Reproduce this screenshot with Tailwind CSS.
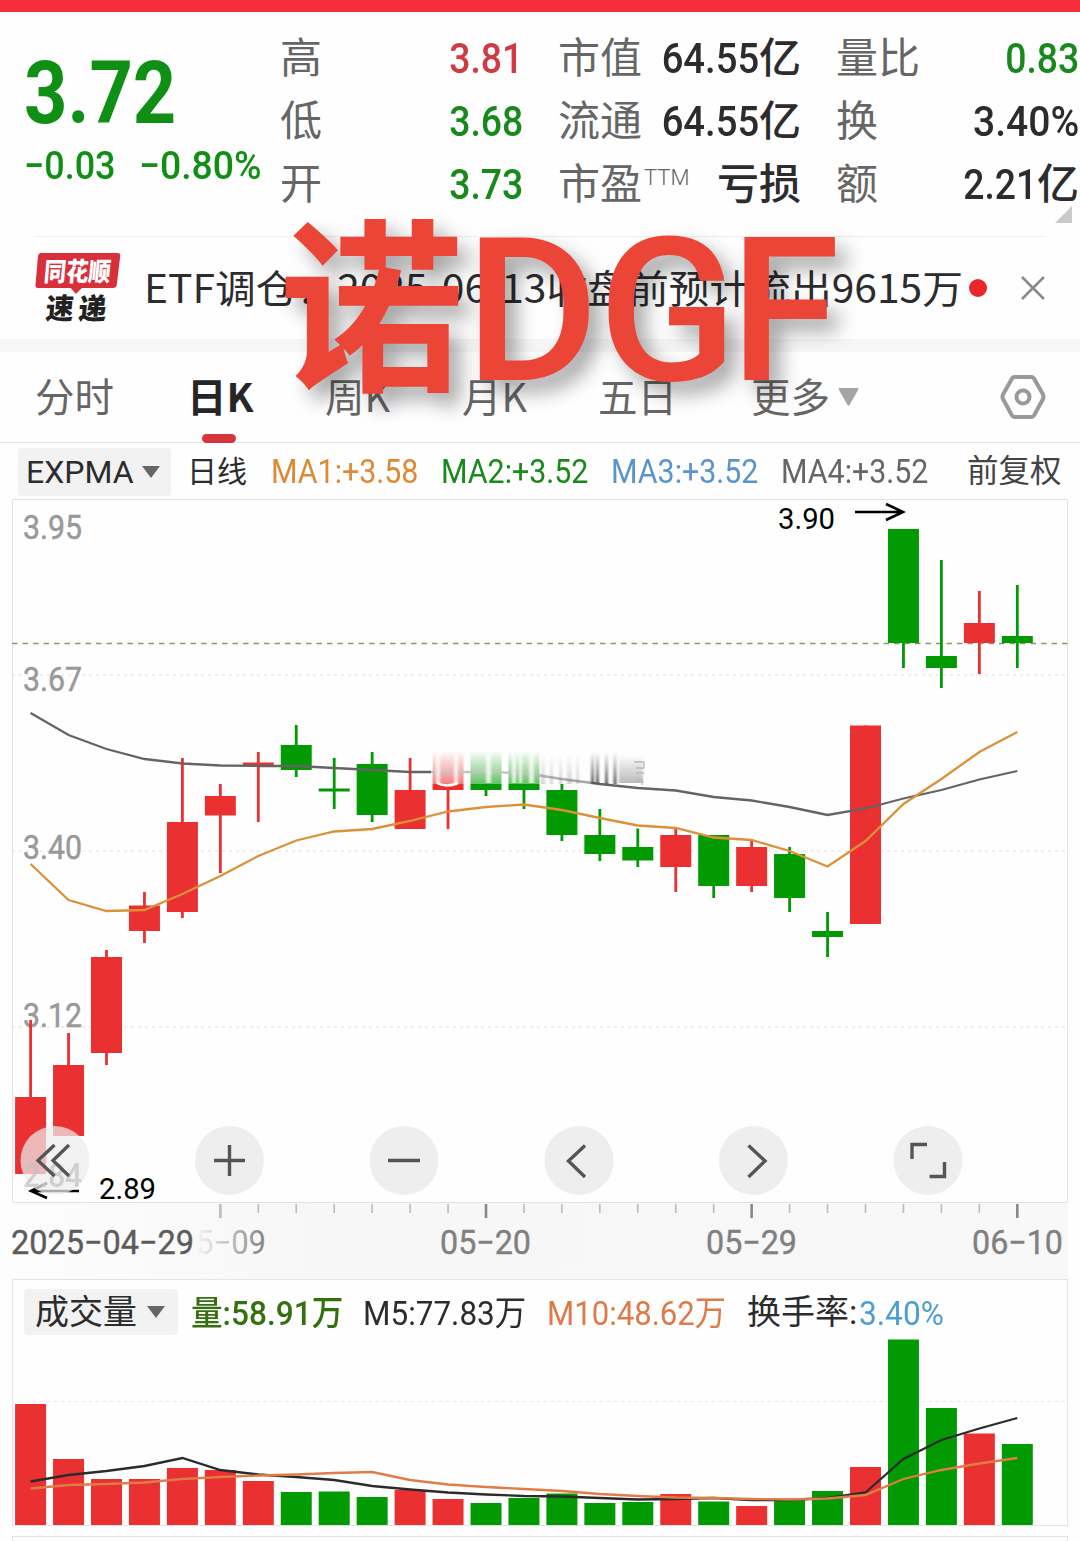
<!DOCTYPE html>
<html lang="zh-CN">
<head>
  <meta charset="UTF-8">
  <title>诺DGF 3.72</title>
  <script src="https://cdn.jsdelivr.net/npm/@tailwindcss/browser@4"></script>
</head>
<body class="bg-[#fefefe] w-[1080px] h-[1541px] overflow-hidden relative font-['Roboto','Noto_Sans_CJK_SC',sans-serif] text-[#2c2c2e] whitespace-nowrap">

  <!-- Top bar -->
  <div class="h-[11.5px] bg-[#f62d3a]"></div>

  <!-- Quote header -->
  <header class="relative h-[224px] flex pt-[15px] text-[42px] leading-[63px] font-medium">
    <div class="w-[280px] pl-[24px] pt-[20px] text-[#0f8f14]">
      <div class="text-[87px] leading-[92px] font-bold origin-left scale-x-[0.87]">3.72</div>
      <div class="flex text-[39.5px] leading-[54px]">
        <span class="w-[115px] origin-left scale-x-[0.91]">−0.03</span>
        <span class="origin-left scale-x-[0.945]">−0.80%</span>
      </div>
    </div>
    <div class="w-[243px]">
      <div class="flex justify-between"><span class="font-normal text-[#666]">高</span><span class="text-[#d03a40] origin-right scale-x-[0.89]">3.81</span></div>
      <div class="flex justify-between"><span class="font-normal text-[#666]">低</span><span class="text-[#178a1b] origin-right scale-x-[0.89]">3.68</span></div>
      <div class="flex justify-between"><span class="font-normal text-[#666]">开</span><span class="text-[#178a1b] origin-right scale-x-[0.89]">3.73</span></div>
    </div>
    <div class="w-[243px] ml-[35px]">
      <div class="flex justify-between"><span class="font-normal text-[#666]">市值</span><span class="flex"><span class="origin-right scale-x-[0.91]">64.55</span>亿</span></div>
      <div class="flex justify-between"><span class="font-normal text-[#666]">流通</span><span class="flex"><span class="origin-right scale-x-[0.91]">64.55</span>亿</span></div>
      <div class="flex justify-between"><span class="flex font-normal text-[#666]">市盈<span class="text-[22px] leading-[50px] font-light pl-[2px]">TTM</span></span><span>亏损</span></div>
    </div>
    <div class="w-[243px] ml-[35px]">
      <div class="flex justify-between"><span class="font-normal text-[#666]">量比</span><span class="text-[#178a1b] origin-right scale-x-[0.89]">0.83</span></div>
      <div class="flex justify-between"><span class="font-normal text-[#666]">换</span><span class="origin-right scale-x-[0.93]">3.40%</span></div>
      <div class="flex justify-between"><span class="font-normal text-[#666]">额</span><span class="flex"><span class="origin-right scale-x-[0.89]">2.21</span>亿</span></div>
    </div>
    <svg class="absolute right-[8px] bottom-[13px] w-[17px] h-[17px]" viewBox="0 0 17 17"><path d="M17 0V17H0Z" fill="#c9c9c9"/></svg>
  </header>

  <!-- News strip -->
  <div class="mx-[35px] border-t border-[#efefef] h-[103px] flex items-center">
    <svg class="w-[88px] h-[74px]" viewBox="0 0 88 74">
      <path d="M6 2H83Q86 2 85.500 5L82 34Q81.500 37 78 37H47L41 43L36 37H3Q0 37 .5 34L3 5Q3.500 2 6 2Z" fill="#d8303b"/>
      <text x="9" y="30" font-size="26" font-weight="900" fill="#fff" textLength="67" lengthAdjust="spacingAndGlyphs" transform="skewX(-5) translate(2 0)">同花顺</text>
      <g transform="translate(15 68) skewX(-5)" font-size="29" font-weight="900" fill="#222">
        <text x="-5" y="0" textLength="28" lengthAdjust="spacingAndGlyphs">速</text>
        <text x="28" y="0" textLength="28" lengthAdjust="spacingAndGlyphs">递</text>
      </g>
    </svg>
    <div class="ml-[21px] w-[824px] text-[39px] font-['Noto_Sans_CJK_SC',sans-serif]"><span class="inline-block origin-left scale-x-[1.045] -translate-y-px">ETF调仓：2025-06-13收盘前预计流出9615万</span></div>
    <div class="w-[18px] h-[18px] ml-[4px] rounded-full bg-[#e8262c]"></div>
    <svg class="w-[24px] h-[24px] ml-[34px]" viewBox="0 0 24 24" fill="none" stroke="#8a8a8a" stroke-width="2.600"><path d="M1 1L23 23M23 1L1 23"/></svg>
  </div>
  <div class="h-[13px] bg-[#f6f6f6]"></div>

  <!-- Period tabs -->
  <nav class="h-[91px] border-b border-[#e4e4e4] flex text-[39.5px] leading-[86px] text-[#666] font-['Noto_Sans_CJK_SC',sans-serif] pl-[35px]">
    <span class="w-[152px]">分时</span>
    <span class="relative w-[138px] font-bold text-[#262626]">日K<i class="absolute left-[15px] bottom-[-1px] w-[34px] h-[9px] rounded-full bg-[#d7343b]"></i></span>
    <span class="w-[137px]">周K</span>
    <span class="w-[136px]">月K</span>
    <span class="w-[153px]">五日</span>
    <span class="w-[87px]">更多</span>
    <svg class="w-[21px] h-[18px] mt-[36px]" viewBox="0 0 21 18"><path d="M1.500 0H19.500Q21 0 20 2L11.500 17Q10.500 18.500 9.500 17L1 2Q0 0 1.500 0Z" fill="#a5a5a5"/></svg>
    <svg class="w-[46px] h-[44px] mt-[23px] ml-[141px]" viewBox="0 0 46 44" fill="none" stroke="#999" stroke-width="4" stroke-linejoin="round"><path d="M14.500 2H31.500Q33 2 34 3.500L43 19.500Q44 22 43 24L34 40.500Q33 42 31.500 42H14.500Q13 42 12 40.500L3 24Q2 22 3 19.500L12 3.500Q13 2 14.500 2Z"/><circle cx="23" cy="22" r="6.500"/></svg>
  </nav>

  <!-- Indicator row -->
  <div class="h-[56px] flex items-center pl-[18px] pt-[2px] text-[33px] leading-[48px]">
    <div class="w-[153px] h-[48px] rounded bg-[#f2f2f2] flex items-center pl-[8px]">
      <span class="w-[116px] text-[32px]">EXPMA</span>
      <svg class="w-[18px] h-[12px]" viewBox="0 0 18 12"><path d="M0 0H18L9 12Z" fill="#666"/></svg>
    </div>
    <span class="w-[85px] pl-[16px] text-[30px]">日线</span>
    <span class="w-[170px] pl-[15px]"><span class="inline-block origin-left scale-x-[0.92] text-[#dc8a35]">MA1:+3.58</span></span>
    <span class="w-[170px] pl-[15px]"><span class="inline-block origin-left scale-x-[0.92] text-[#178a1b]">MA2:+3.52</span></span>
    <span class="w-[170px] pl-[15px]"><span class="inline-block origin-left scale-x-[0.92] text-[#5a94cc]">MA3:+3.52</span></span>
    <span class="w-[186px] pl-[15px]"><span class="inline-block origin-left scale-x-[0.92] text-[#666]">MA4:+3.52</span></span>
    <span class="pl-[15px] text-[31.500px] text-[#444]">前复权</span>
  </div>

  <!-- K-line chart -->
  <div class="relative h-[780px]">
    <svg id="kline" class="block w-[1080px] h-[780px]" viewBox="0 499 1080 780">
      <defs>
        <linearGradient id="fade" x1="0" y1="0" x2="0" y2="1"><stop offset="0" stop-color="#fefefe"/><stop offset=".15" stop-color="#fefefe" stop-opacity=".95"/><stop offset="1" stop-color="#fefefe" stop-opacity="0.4"/></linearGradient>
        <linearGradient id="streak" x1="0" y1="0" x2="0" y2="1"><stop offset="0" stop-color="#555" stop-opacity="0"/><stop offset="1" stop-color="#555"/></linearGradient>
        <filter id="smear" x="-5%" width="110%"><feGaussianBlur stdDeviation="1 0"/></filter>
        <linearGradient id="axis" x1="0" y1="0" x2="1" y2="0"><stop offset="0" stop-color="#fdfdfd"/><stop offset=".3" stop-color="#f7f7f7"/><stop offset="1" stop-color="#f8f8f8"/></linearGradient>
        <linearGradient id="dateFade" x1="190" x2="262" y1="0" y2="0" gradientUnits="userSpaceOnUse"><stop offset="0" stop-color="#fff"/><stop offset=".25" stop-color="#e4e4e4"/><stop offset="1" stop-color="#888"/></linearGradient>
      </defs>
      <rect x="0" y="1203" width="1068" height="76" fill="url(#axis)"/>
      <rect x="12.500" y="499.500" width="1055" height="703" fill="none" stroke="#e2e2e2"/>
      <g stroke="#dedede" stroke-dasharray="3 4"><path d="M12 675H1068M12 851H1068M12 1027H1068"/></g>
      <g fill="#999" stroke="#999" stroke-width=".5" font-size="33.500">
        <text x="23" y="539" textLength="59" lengthAdjust="spacingAndGlyphs">3.95</text>
        <text x="23" y="691" textLength="59" lengthAdjust="spacingAndGlyphs">3.67</text>
        <text x="23" y="859" textLength="59" lengthAdjust="spacingAndGlyphs">3.40</text>
        <text x="23" y="1027" textLength="59" lengthAdjust="spacingAndGlyphs">3.12</text>
      </g>
      <path d="M12 643.500H1068" stroke="#8b9a66" stroke-width="1.300" stroke-dasharray="5.500 5"/>
      <g id="candles"></g>
      <polyline id="maSlow" fill="none" stroke="#646464" stroke-width="2.300"/>
      <!-- faded watermark -->
      <rect x="431" y="748" width="161" height="36" fill="url(#fade)"/>
      <path d="M437 783Q447 788 458 783" fill="none" stroke="#fff" stroke-width="2.500"/>
      <g filter="url(#smear)">
        <g fill="#fff" opacity=".75"><rect x="436" y="753" width="4" height="30"/><rect x="454" y="753" width="4" height="30"/><rect x="486" y="753" width="5" height="30"/><rect x="512" y="753" width="4" height="30"/><rect x="519" y="753" width="3" height="30"/><rect x="529" y="753" width="5" height="30"/></g>
        <g fill="url(#streak)" opacity=".25"><rect x="541" y="755" width="4" height="29"/><rect x="550" y="755" width="3" height="29"/><rect x="559" y="755" width="3" height="29"/><rect x="567" y="755" width="5" height="29"/><rect x="576" y="755" width="3" height="29"/></g>
        <g fill="url(#streak)"><rect x="591" y="752" width="3" height="32"/><rect x="596" y="752" width="3" height="32"/><rect x="605" y="752" width="3" height="32"/><rect x="613.500" y="752" width="3" height="32"/></g>
        <g fill="url(#streak)" opacity=".4"><rect x="619" y="755" width="24" height="28"/></g>
      </g>
      <path d="M634 762H644V768H636M636 773H644M637 780H642V785" fill="none" stroke="#bbb" stroke-width="1.300"/>
      <polyline id="maFast" fill="none" stroke="#dc9138" stroke-width="2.300"/>
      <g font-size="30" fill="#000">
        <text x="778" y="529" textLength="57" lengthAdjust="spacingAndGlyphs">3.90</text>
        <text x="99" y="1199" textLength="57" lengthAdjust="spacingAndGlyphs">2.89</text>
      </g>
      <g fill="none" stroke="#000" stroke-width="2.600"><path d="M855 512H903M886 504L903 512L886 520"/><path d="M79 1191H31M47 1183L31 1191L47 1198"/></g>
      <g id="ticks"></g>
      <!-- chart buttons -->
      <g fill="#ededed" fill-opacity=".93"><circle cx="229.500" cy="1160.500" r="34.500"/><circle cx="404" cy="1160.500" r="34.500"/><circle cx="579" cy="1160.500" r="34.500"/><circle cx="753.500" cy="1160.500" r="34.500"/><circle cx="928" cy="1160.500" r="34.500"/></g>
      <circle cx="55" cy="1160.500" r="34.500" fill="#ededed" fill-opacity=".72"/>
      <text x="23" y="1187" textLength="59" lengthAdjust="spacingAndGlyphs" font-size="33.500" font-weight="500" fill="#c4c4c4" fill-opacity=".75">2.84</text>
      <g fill="none" stroke="#555" stroke-width="3.400">
        <path d="M54.500 1145L38 1160.500L54.500 1176M69 1145L53 1160.500L69 1176"/>
        <path d="M214 1160.500H245M229.500 1145V1176M388 1160.500H420"/>
        <path d="M585 1145.500L568.500 1161L585 1177M748.500 1145.500L765 1161L748.500 1177"/>
        <path d="M912 1159V1144.500H927M929.500 1176.500H944.500V1162"/>
      </g>
      <g font-size="33" fill="#808080" stroke-width=".4">
        <text x="196" y="1254" textLength="70" lengthAdjust="spacingAndGlyphs" fill="url(#dateFade)">5−09</text>
        <g stroke="#808080">
          <text x="440" y="1254" textLength="91" lengthAdjust="spacingAndGlyphs">05−20</text>
          <text x="706" y="1254" textLength="91" lengthAdjust="spacingAndGlyphs">05−29</text>
          <text x="972" y="1254" textLength="91" lengthAdjust="spacingAndGlyphs">06−10</text>
        </g>
        <text x="11" y="1254" textLength="183" lengthAdjust="spacingAndGlyphs" fill="#5c5c5c" stroke="#5c5c5c">2025−04−29</text>
      </g>
    </svg>
  </div>

  <!-- Volume panel -->
  <section class="mx-[12px] h-[247px] border border-[#e4e4e4]">
    <div class="flex items-center h-[46px] mt-[9px] pl-[11px] text-[34px] leading-[46px]">
      <div class="w-[154px] h-[46px] rounded bg-[#f2f2f2] flex items-center pl-[11px]">
        <span class="w-[112px]">成交量</span>
        <svg class="w-[18px] h-[12px]" viewBox="0 0 18 12"><path d="M0 0H18L9 12Z" fill="#666"/></svg>
      </div>
      <span class="w-[172px] pl-[13px] pt-[2px] text-[#35700f] font-medium"><span class="inline-block origin-left scale-x-[0.93]">量:58.91万</span></span>
      <span class="w-[184px] pl-[13px] pt-[2px]"><span class="inline-block origin-left scale-x-[0.925]">M5:77.83万</span></span>
      <span class="w-[200px] pl-[13px] pt-[2px] text-[#dd7a48]"><span class="inline-block origin-left scale-x-[0.915]">M10:48.62万</span></span>
      <span class="w-[125px] pl-[13px]">换手率:</span>
      <span class="pt-[2px] origin-left scale-x-[0.93] text-[#4b9fd0]">3.40%</span>
    </div>
    <svg class="block w-[1056px] h-[190px] -ml-px" viewBox="12 1335 1056 190">
      <path d="M12 1401.500H1068" stroke="#e6e6e6" stroke-dasharray="3 4"/>
      <g id="bars"></g>
      <polyline id="vol5" fill="none" stroke="#2b2b2b" stroke-width="2.300"/>
      <polyline id="vol10" fill="none" stroke="#e07c45" stroke-width="2.300"/>
    </svg>
  </section>
  <div class="mx-[12px] mt-[10px] h-[6px] border border-b-0 border-[#e4e4e4]"></div>

  <!-- Title caption -->
  <svg class="absolute left-0 top-[190px] w-[1080px] h-[240px] drop-shadow-[11px_12px_10px_rgba(0,0,0,0.35)]" viewBox="0 190 1080 240" fill="#eb4537">
    <text x="279" y="377" font-size="185" font-weight="700" font-family="Noto Sans CJK SC">诺</text>
    <g font-size="201" font-weight="500">
      <text x="465" y="380" textLength="134" lengthAdjust="spacingAndGlyphs">D</text>
      <text x="598" y="380" textLength="139" lengthAdjust="spacingAndGlyphs">G</text>
      <text x="730" y="380" textLength="110" lengthAdjust="spacingAndGlyphs">F</text>
    </g>
  </svg>

  <script>
    const RED = "#ea3031", GREEN = "#029a02";
    const cx = i => 30.6 + 37.95 * i;

    // [up, bodyTop, bodyBottom, high, low, volumeTop]
    const days = [
      [1, 1097, 1174, 1020, 1174, 1404], [1, 1065, 1136, 1033, 1136, 1459],
      [1, 957, 1053, 950, 1065, 1479], [1, 905.5, 931, 892, 943, 1479],
      [1, 822, 912, 758, 918, 1468], [1, 796, 815.5, 784, 873, 1470],
      [1, 762.5, 765.5, 752, 822, 1481], [0, 745, 770, 725, 777, 1492],
      [0, 788.5, 791.5, 758, 809, 1491.5], [0, 764, 815, 752, 822, 1497],
      [1, 790, 829, 758, 829, 1490], [1, 752, 790, 752, 829, 1499],
      [0, 752, 790, 752, 796, 1503], [0, 752, 790, 752, 809, 1498],
      [0, 790, 835, 784, 841, 1493.5], [0, 835, 854, 809, 861, 1503],
      [0, 847, 860.5, 828.5, 867, 1502], [1, 835, 867, 828, 892, 1494],
      [0, 835, 886, 835, 898, 1501.5], [1, 847, 886, 840, 892, 1506],
      [0, 854, 898, 847, 912, 1500], [0, 931, 937, 912, 957, 1491],
      [1, 725.5, 924, 725.5, 924, 1467], [0, 529, 643, 529, 668, 1339.5],
      [0, 656, 668, 560, 688, 1408], [1, 623, 643, 591, 674, 1433.5],
      [0, 636, 643, 585, 668, 1444]
    ];

    let candles = "", bars = "", ticks = "";
    days.forEach(([up, top, bottom, high, low, vol], i) => {
      const x = cx(i), c = up ? RED : GREEN;
      candles += `<rect x="${x - 15.5}" y="${top}" width="31" height="${bottom - top}" fill="${c}"/>`;
      candles += `<rect x="${x - 1.4}" y="${high}" width="2.8" height="${low - high}" fill="${c}"/>`;
      bars += `<rect x="${x - 15.5}" y="${vol}" width="31" height="${1525 - vol}" fill="${c}"/>`;
      if (i >= 5) {
        const major = (i - 5) % 7 === 0;
        ticks += `<rect x="${x - (major ? 1.3 : 0.8)}" y="1204" width="${major ? 2.6 : 1.6}" height="${major ? 14 : 9}" fill="${major && i > 5 ? "#888" : "#bbb"}"/>`;
      }
    });
    document.getElementById("candles").innerHTML = candles;
    document.getElementById("bars").innerHTML = bars;
    document.getElementById("ticks").innerHTML = ticks;

    function line(id, ys) {
      document.getElementById(id).setAttribute("points", ys.map((y, i) => `${cx(i)},${y}`).join(" "));
    }
    line("maSlow", [713, 735, 749, 759, 763.5, 765.5, 766, 766, 768, 770, 772, 772, 772, 773, 779, 784, 788, 790.5, 797, 800.5, 807, 815, 808.5, 798.5, 790, 779.5, 771]);
    line("maFast", [864, 900, 911, 910, 894, 876, 856, 840.5, 831.5, 829, 821, 811.5, 807, 804.5, 810, 818, 825.5, 828, 837.5, 840, 851, 866.5, 841, 804, 779, 752, 732]);
    line("vol5", [1481.5, 1475, 1471, 1466, 1458, 1470, 1474.5, 1477, 1480, 1486, 1489.5, 1492.5, 1494.5, 1496, 1496.5, 1498, 1499.5, 1499, 1498, 1500, 1500, 1498, 1492.5, 1459, 1440, 1428.5, 1418]);
    line("vol10", [1488.5, 1485, 1484, 1482.5, 1479, 1477, 1475.5, 1474.5, 1473, 1472, 1480, 1484.5, 1487, 1489, 1491, 1494, 1496, 1497.5, 1498, 1499, 1499.5, 1498.5, 1495, 1479, 1470, 1463.5, 1458]);
  </script>
</body>
</html>
